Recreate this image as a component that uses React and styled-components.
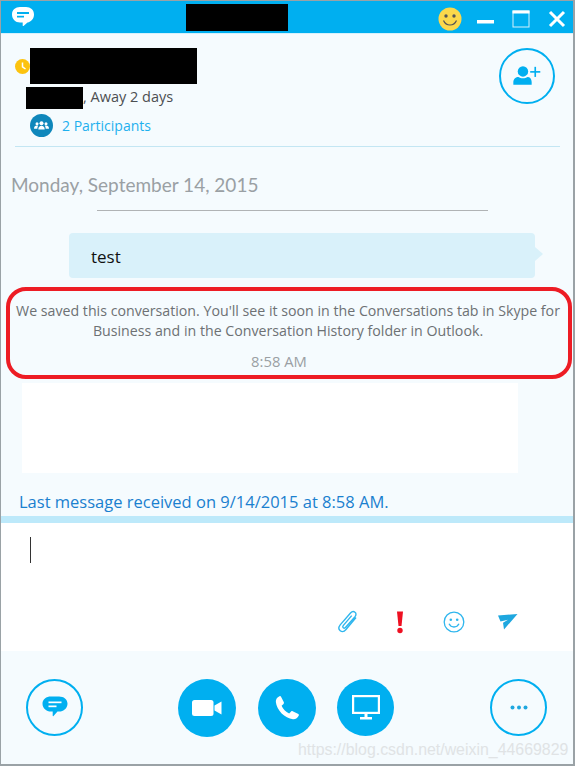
import React from 'react';
import styled, { createGlobalStyle } from 'styled-components';

const GlobalStyle = createGlobalStyle`
  html, body {
    margin: 0;
    padding: 0;
    background: #ffffff;
  }
  body {
    font-family: 'Open Sans', 'Noto Sans', sans-serif;
  }
`;

const BLUE = '#00aff0';

const Window = styled.div`
  position: relative;
  width: 575px;
  height: 766px;
  box-sizing: border-box;
  border: solid #9aa2a6;
  border-width: 1px 2px 2px 1px;
  background: #f5fbfe;
  display: flex;
  flex-direction: column;
  overflow: hidden;
`;

const TitleBar = styled.header`
  height: 33px;
  flex: none;
  box-sizing: border-box;
  background: ${BLUE};
  border-bottom: 1px solid #d5f1fc;
  display: flex;
  align-items: center;
  padding: 0 0 0 10px;

  svg {
    flex: none;
  }
`;

const TitleSpacer = styled.div`
  width: ${p => p.$w}px;
  flex: none;
`;

const WindowControls = styled.div`
  display: flex;
  align-items: center;
  margin-top: 4px;
`;

const Redacted = styled.div`
  width: ${p => p.$w}px;
  height: ${p => p.$h}px;
  flex: none;
  background: #000;
`;

const Header = styled.section`
  height: 113px;
  flex: none;
  margin: 0 13px 0 14px;
  box-sizing: border-box;
  border-bottom: 1px solid #c3e6f3;
  display: flex;
  justify-content: space-between;
  padding: 14px 5px 0 0;
`;

const HeaderInfo = styled.div`
  display: flex;
  flex-direction: column;
`;

const NameRow = styled.div`
  display: flex;
  align-items: center;
`;

const StatusRow = styled.div`
  display: flex;
  align-items: flex-start;
  margin: 3px 0 0 11px;
  font-size: 14.5px;
  line-height: 20px;
  color: #4c4f52;
  height: 22px;
`;

const ParticipantRow = styled.div`
  display: flex;
  align-items: center;
  gap: 9px;
  margin: 5px 0 0 15px;
  font-size: 14px;
  line-height: 18px;
  color: #1eb0ee;
`;

const OutlineCircle = styled.button`
  width: ${p => p.$size}px;
  height: ${p => p.$size}px;
  flex: none;
  padding: 0;
  border-radius: 50%;
  border: 2.5px solid ${BLUE};
  background: transparent;
  display: flex;
  align-items: center;
  justify-content: center;
`;

const FilledCircle = styled.button`
  width: ${p => p.$size}px;
  height: ${p => p.$size}px;
  flex: none;
  padding: 0;
  border: 0;
  border-radius: 50%;
  background: ${BLUE};
  display: flex;
  align-items: center;
  justify-content: center;
`;

const Conversation = styled.main`
  height: 369px;
  flex: none;
  display: flex;
  flex-direction: column;
`;

const DateLabel = styled.div`
  margin: 24px 0 0 10px;
  font-family: Lato, 'Open Sans', sans-serif;
  font-size: 19px;
  line-height: 28px;
  color: #9aa0a4;
`;

const DateRule = styled.div`
  height: 1px;
  margin: 11px 0 0 96px;
  width: 391px;
  background: #b0b3b5;
`;

const Bubble = styled.div`
  position: relative;
  margin: 22px 0 0 68px;
  width: 466px;
  height: 45px;
  box-sizing: border-box;
  padding: 0 22px;
  border-radius: 4px;
  background: #d9f1fa;
  color: #111;
  font-size: 17px;
  line-height: 48px;

  &::after {
    content: '';
    position: absolute;
    right: -8px;
    top: 14px;
    border-left: 8px solid #d9f1fa;
    border-top: 7px solid transparent;
    border-bottom: 7px solid transparent;
  }
`;

const SavedNotice = styled.div`
  margin: 9px 0 0 5px;
  width: 566px;
  height: 92px;
  flex: none;
  box-sizing: border-box;
  border: 4px solid #ed1c24;
  border-radius: 20px;
  padding: 10px 4px 0 2px;
  text-align: center;
  font-size: 14.2px;
  line-height: 20px;
  color: #6d7174;
`;

const NoticeTime = styled.div`
  margin-top: 10px;
  padding-right: 18px;
  font-size: 14.8px;
  color: #9a9fa3;
`;

const BlankCard = styled.div`
  margin: 4px 0 0 21px;
  width: 496px;
  height: 90px;
  flex: none;
  background: #fff;
`;

const LastReceived = styled.div`
  margin: 17px 0 0 18px;
  font-size: 16.5px;
  line-height: 24px;
  color: #1a80cf;
`;

const Composer = styled.section`
  height: 135px;
  flex: none;
  box-sizing: border-box;
  border-top: 7px solid #bde9fa;
  background: #fff;
  display: flex;
  flex-direction: column;
  justify-content: space-between;
  padding: 14px 52px 16px 29px;
`;

const Caret = styled.div`
  width: 1px;
  height: 26px;
  background: #333;
`;

const ComposerTools = styled.div`
  display: flex;
  justify-content: flex-end;
  align-items: center;
  gap: 27px;
`;

const ToolSlot = styled.div`
  width: 27px;
  height: 26px;
  display: flex;
  align-items: center;
  justify-content: center;
`;

const CallBar = styled.footer`
  flex: 1;
  display: flex;
  align-items: center;
  justify-content: space-between;
  padding: 0 26px 0 25px;
`;

const CallGroup = styled.div`
  display: flex;
  align-items: center;
  gap: 21.5px;
  margin: 0 auto 0 95px;
`;

const Watermark = styled.div`
  position: absolute;
  left: 297px;
  top: 738px;
  font-family: 'Liberation Sans', Arial, sans-serif;
  font-size: 15.9px;
  line-height: 22px;
  color: #e0e3e5;
  white-space: nowrap;
`;

const WindowChat = () => (
  <svg width="24" height="24" viewBox="0 0 24 24">
    <path d="M9 2h6c4.500 0 8 2.800 8 7.500 0 4.200-2.800 7.300-6.500 8l-4 3.500c-.5.300-.8 0-.8-.5V17.500H9c-4.500 0-8-3.300-8-8S4.500 2 9 2z" fill="#fff" />
    <rect x="6" y="7" width="12" height="2" fill={BLUE} />
    <rect x="6" y="10.800" width="7" height="1.700" fill={BLUE} />
  </svg>
);

const YellowSmiley = () => (
  <svg width="24" height="24" viewBox="0 0 24 24">
    <circle cx="12" cy="12" r="11.500" fill="#fbd84b" />
    <circle cx="8" cy="9" r="1.700" fill="#555" />
    <circle cx="16" cy="9" r="1.700" fill="#555" />
    <path d="M5.500 13.500c1.500 3.500 4 4.500 6.500 4.500s5-1 6.500-4.500" fill="none" stroke="#555" strokeWidth="1.200" />
  </svg>
);

const Minimize = () => (
  <svg width="18" height="24" viewBox="0 0 18 24">
    <rect x="0" y="13" width="17" height="3.500" fill="#fff" />
  </svg>
);

const Maximize = () => (
  <svg width="18" height="18" viewBox="0 0 18 18">
    <rect x="1" y="1" width="16" height="16" fill="none" stroke="#d5f1fc" strokeWidth="1" />
    <rect x="0.500" y="0.500" width="17" height="3" fill="#fff" />
  </svg>
);

const CloseIcon = () => (
  <svg width="18" height="18" viewBox="0 0 18 18">
    <path d="M2 2l14 14M16 2L2 16" stroke="#fff" strokeWidth="3" />
  </svg>
);

const AwayClock = () => (
  <svg width="15" height="15" viewBox="0 0 15 15">
    <circle cx="7.500" cy="7.500" r="7.500" fill="#fcc30f" />
    <path d="M7.500 3.500v4.300l3 2.200" fill="none" stroke="#fff" strokeWidth="1.500" />
  </svg>
);

const ParticipantsBadge = () => (
  <svg width="23" height="23" viewBox="0 0 23 23">
    <circle cx="11.500" cy="11.500" r="11.500" fill="#0f87bb" />
    <g fill="#fff">
      <circle cx="11.500" cy="9.200" r="2" />
      <circle cx="7" cy="9.800" r="1.500" />
      <circle cx="16" cy="9.800" r="1.500" />
      <path d="M8.300 15.500c0-2.500 1.400-3.700 3.200-3.700s3.200 1.200 3.200 3.700z" />
      <path d="M4 14.700c0-2 1.200-3.200 3-3.200.5 0 .9.100 1.200.3-.6.700-.9 1.700-.9 2.900z" />
      <path d="M19 14.700c0-2-1.200-3.200-3-3.200-.5 0-.9.100-1.200.3.600.7.900 1.700.9 2.900z" />
    </g>
  </svg>
);

const AddPerson = () => (
  <svg width="30" height="22" viewBox="0 0 32 24" style={{ marginLeft: 1 }}>
    <g fill={BLUE}>
      <circle cx="10.500" cy="7" r="5.700" />
      <path d="M0 21.500v-3c0-3.500 3-5.500 5.500-5.500 1.500 1 3 1.500 5 1.500s3.500-.5 5-1.500c2.500 0 4.500 2 4.500 5.500v3z" />
      <rect x="23" y="2" width="1.800" height="11" />
      <rect x="18.400" y="6.600" width="11" height="1.800" />
    </g>
  </svg>
);

const Paperclip = () => (
  <svg width="22" height="24" viewBox="0 0 22 24" style={{ marginLeft: 4 }}>
    <path
      d="M19 7.500L9 19.500c-1.800 2.200-4.300 2.400-5.800 1.200-1.600-1.300-1.700-3.700 0-5.800L13.500 3c1.400-1.600 3.200-1.900 4.500-.8 1.300 1 1.300 2.800 0 4.400L8.700 17.300c-.8.900-1.800 1-2.400.5-.7-.6-.6-1.500.1-2.400l8.300-9.800"
      fill="none"
      stroke="#2fb6ee"
      strokeWidth="1.400"
    />
  </svg>
);

const Importance = () => (
  <svg width="8" height="24" viewBox="0 0 8 24">
    <path d="M1 1.500h6L5.500 16h-3z" fill="#ee1022" />
    <circle cx="4" cy="20.500" r="2.700" fill="#ee1022" />
  </svg>
);

const ToolSmiley = () => (
  <svg width="22" height="22" viewBox="0 0 22 22">
    <circle cx="11" cy="11" r="9.800" fill="none" stroke="#2fb6ee" strokeWidth="1.300" />
    <circle cx="7.800" cy="8.800" r="1.300" fill="#2fb6ee" />
    <circle cx="14.200" cy="8.800" r="1.300" fill="#2fb6ee" />
    <path d="M6 12.800c1.200 2.400 3 3.200 5 3.200s3.800-.8 5-3.200" fill="none" stroke="#2fb6ee" strokeWidth="1.300" />
  </svg>
);

const SendArrow = () => (
  <svg width="20" height="16" viewBox="0 0 20 16">
    <path d="M0 1.500L19.500 0 6 15.500 5 8.700l5-3-7.500 1.700z" fill="#1ea7df" />
  </svg>
);

const ChatIcon = () => (
  <svg width="26" height="24" viewBox="0 0 26 24">
    <path d="M9 .5h8c4.700 0 8.500 2.800 8.500 7.200S21.700 15.500 17 15.500h-1.500l-4 4.500c-.4.400-.8.200-.8-.3v-4.200H9C4.300 15.500.5 12.200.5 7.700S4.300.5 9 .5z" fill={BLUE} />
    <rect x="6.500" y="5.500" width="13" height="1.700" fill="#fff" />
    <rect x="6.500" y="9.500" width="8" height="1.700" fill="#fff" />
  </svg>
);

const VideoIcon = () => (
  <svg width="30" height="16" viewBox="0 0 30 16">
    <rect x="0" y="0" width="21.500" height="16" rx="2.500" fill="#fff" />
    <path d="M22.500 5.500L29.500 1.500v13l-7-4z" fill="#fff" />
  </svg>
);

const PhoneIcon = () => (
  <svg width="26" height="26" viewBox="0 0 24 24">
    <path
      d="M6.500 1.500l2.600 5.300c.2.500.1 1-.3 1.400L7 10c1.200 3 3.800 5.600 7 7l1.800-1.800c.4-.4.900-.5 1.400-.3l5.300 2.600c.5.300.6.900.4 1.400-1 2.300-3 3.600-5.400 3.400C10 21.500 2.500 14 1.700 6.400 1.500 4 2.800 2 5.100 1.100c.5-.2 1.100-.1 1.400.4z"
      fill="#fff"
    />
  </svg>
);

const ScreenIcon = () => (
  <svg width="28" height="25" viewBox="0 0 28 25">
    <rect x="1.100" y="1.100" width="25.800" height="16.800" fill="none" stroke="#fff" strokeWidth="2.200" />
    <rect x="12.500" y="19" width="3" height="3" fill="#fff" />
    <rect x="8" y="22" width="12" height="2.500" fill="#fff" />
  </svg>
);

const MoreIcon = () => (
  <svg width="18" height="5" viewBox="0 0 18 5">
    <circle cx="2.500" cy="2.500" r="2" fill="#1ea7df" />
    <circle cx="9" cy="2.500" r="2" fill="#1ea7df" />
    <circle cx="15.500" cy="2.500" r="2" fill="#1ea7df" />
  </svg>
);

export default function App() {
  return (
    <>
      <GlobalStyle />
      <Window>
        <TitleBar>
          <WindowChat />
          <TitleSpacer $w={151} />
          <Redacted $w={102} $h={27} />
          <TitleSpacer $w={150} />
          <WindowControls>
            <YellowSmiley />
            <TitleSpacer $w={15} />
            <Minimize />
            <TitleSpacer $w={17} />
            <Maximize />
            <TitleSpacer $w={18} />
            <CloseIcon />
          </WindowControls>
        </TitleBar>

        <Header>
          <HeaderInfo>
            <NameRow>
              <AwayClock />
              <Redacted $w={167} $h={36} />
            </NameRow>
            <StatusRow>
              <Redacted $w={57} $h={22} />
              , Away 2 days
            </StatusRow>
            <ParticipantRow>
              <ParticipantsBadge />
              2 Participants
            </ParticipantRow>
          </HeaderInfo>
          <OutlineCircle $size={56}>
            <AddPerson />
          </OutlineCircle>
        </Header>

        <Conversation>
          <DateLabel>Monday, September 14, 2015</DateLabel>
          <DateRule />
          <Bubble>test</Bubble>
          <SavedNotice>
            We saved this conversation. You'll see it soon in the Conversations tab in Skype for Business and in the Conversation History folder in Outlook.
            <NoticeTime>8:58 AM</NoticeTime>
          </SavedNotice>
          <BlankCard />
          <LastReceived>Last message received on 9/14/2015 at 8:58 AM.</LastReceived>
        </Conversation>

        <Composer>
          <Caret />
          <ComposerTools>
            <ToolSlot><Paperclip /></ToolSlot>
            <ToolSlot><Importance /></ToolSlot>
            <ToolSlot><ToolSmiley /></ToolSlot>
            <ToolSlot><SendArrow /></ToolSlot>
          </ComposerTools>
        </Composer>

        <CallBar>
          <OutlineCircle $size={57}><ChatIcon /></OutlineCircle>
          <CallGroup>
            <FilledCircle $size={58}><VideoIcon /></FilledCircle>
            <FilledCircle $size={58}><PhoneIcon /></FilledCircle>
            <FilledCircle $size={57}><ScreenIcon /></FilledCircle>
          </CallGroup>
          <OutlineCircle $size={57}><MoreIcon /></OutlineCircle>
        </CallBar>

        <Watermark>https://blog.csdn.net/weixin_44669829</Watermark>
      </Window>
    </>
  );
}
